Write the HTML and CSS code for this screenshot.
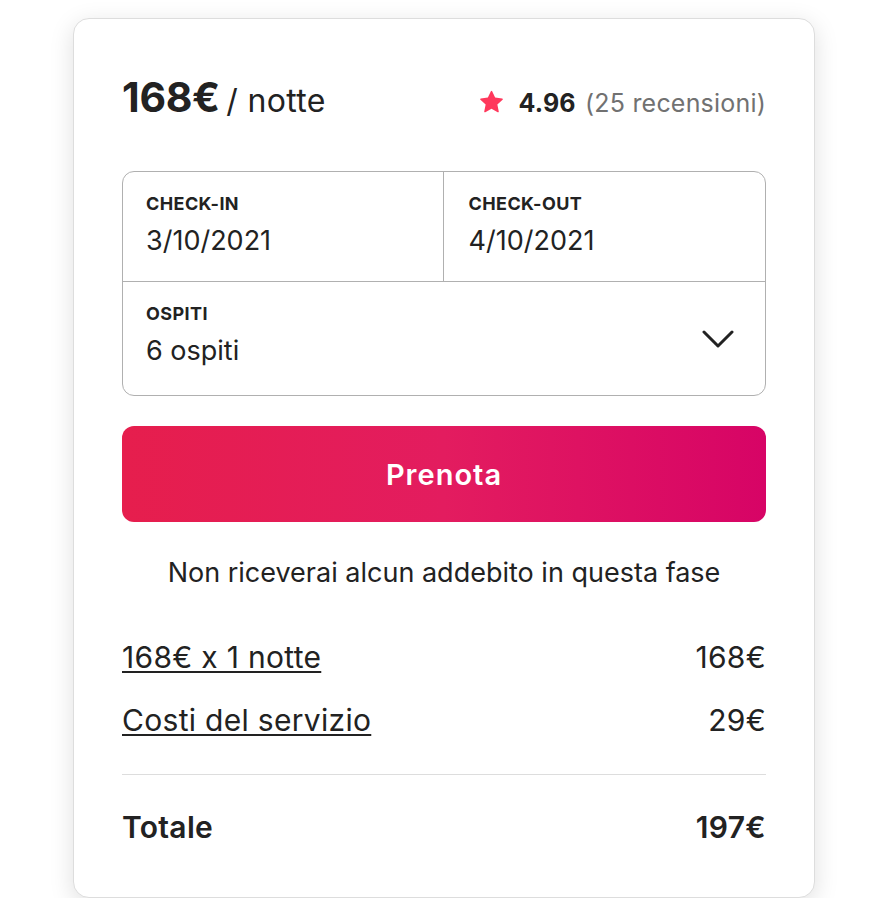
FILE: index.html
```html
<!DOCTYPE html>
<html lang="it">
<head>
<meta charset="utf-8">
<title>Prenota</title>
<link rel="stylesheet" href="styles.css">
</head>
<body>
<div class="card">
  <div class="header">
    <div class="price"><span class="amount">168€</span> <span class="per">/ notte</span></div>
    <div class="rating">
      <svg class="star" viewBox="0 0 32 32" aria-hidden="true"><path d="M15.094 1.579l-4.124 8.885-9.86 1.27a1 1 0 0 0-.542 1.736l7.293 6.565-1.965 9.852a1 1 0 0 0 1.483 1.061L16 25.951l8.625 4.997a1 1 0 0 0 1.482-1.06l-1.965-9.853 7.293-6.565a1 1 0 0 0-.541-1.735l-9.86-1.271-4.127-8.885a1 1 0 0 0-1.814 0z"/></svg>
      <span class="score">4.96</span>
      <span class="reviews">(25 recensioni)</span>
    </div>
  </div>

  <div class="picker">
    <div class="dates">
      <div class="cell">
        <div class="label">CHECK-IN</div>
        <div class="value">3/10/2021</div>
      </div>
      <div class="cell cell-right">
        <div class="label">CHECK-OUT</div>
        <div class="value">4/10/2021</div>
      </div>
    </div>
    <div class="guests">
      <div class="cell">
        <div class="label">OSPITI</div>
        <div class="value">6 ospiti</div>
      </div>
      <svg class="chevron" viewBox="0 0 32 18" aria-hidden="true"><polyline points="2,2 16,16 30,2"/></svg>
    </div>
  </div>

  <button class="book">Prenota</button>

  <p class="note">Non riceverai alcun addebito in questa fase</p>

  <div class="lines">
    <div class="line"><span class="link">168€ x 1 notte</span><span>168€</span></div>
    <div class="line"><span class="link">Costi del servizio</span><span>29€</span></div>
  </div>

  <div class="total"><span>Totale</span><span>197€</span></div>
</div>
</body>
</html>
```

FILE: styles.css
```css
html, body {
  margin: 0;
  padding: 0;
  background: #ffffff;
}

body {
  font-family: "Inter", "Noto Sans", "Liberation Sans", sans-serif;
  color: #222222;
  padding: 18px 0 0 73px;
}

.card {
  width: 644px;
  padding: 50px 48px 50px 48px;
  border: 1px solid #dddddd;
  border-radius: 16px;
  background: #ffffff;
  box-shadow: 0 6px 24px rgba(0, 0, 0, 0.13);
}

.header {
  display: flex;
  justify-content: space-between;
  align-items: baseline;
  height: 56px;
  line-height: 56px;
  margin-bottom: 46px;
}

.amount {
  font-size: 41px;
  font-weight: 700;
  letter-spacing: -0.3px;
}

.per {
  font-size: 32px;
  font-weight: 400;
  margin-left: 2px;
  letter-spacing: 0.3px;
}

.rating {
  font-size: 25px;
  letter-spacing: 0.2px;
}

.star {
  width: 23px;
  height: 23px;
  fill: #ff385c;
  margin-right: 8px;
  vertical-align: -1px;
}

.score {
  font-weight: 700;
  margin-right: 2px;
}

.reviews {
  color: #717171;
}

.picker {
  border: 1px solid #b0b0b0;
  border-radius: 12px;
}

.dates {
  display: flex;
  border-bottom: 1px solid #b0b0b0;
}

.dates .cell {
  flex: 1;
}

.cell {
  padding: 20px 24px 22px 23px;
}

.cell-right {
  border-left: 1px solid #b0b0b0;
  padding-left: 25px;
}

.label {
  font-size: 18px;
  font-weight: 700;
  line-height: 24px;
  letter-spacing: 0.4px;
}

.value {
  font-size: 27px;
  line-height: 36px;
  margin-top: 7px;
}

.guests {
  display: flex;
  align-items: center;
  justify-content: space-between;
}

.guests .cell {
  padding-bottom: 26px;
}

.chevron {
  width: 32px;
  height: 18px;
  margin-right: 31px;
  fill: none;
  stroke: #222222;
  stroke-width: 3;
  stroke-linecap: round;
  stroke-linejoin: round;
}

.book {
  display: block;
  width: 100%;
  height: 96px;
  margin-top: 30px;
  border: none;
  border-radius: 12px;
  background: linear-gradient(to right, #e61e4d 0%, #e31c5f 50%, #d70466 100%);
  color: #ffffff;
  font-family: inherit;
  font-size: 29px;
  font-weight: 600;
  letter-spacing: 1px;
}

.note {
  margin: 33px 0 0;
  text-align: center;
  font-size: 27px;
  line-height: 36px;
}

.lines {
  margin-top: 46px;
  padding-bottom: 34px;
  border-bottom: 1px solid #dddddd;
  display: flex;
  flex-direction: column;
  gap: 23px;
}

.line,
.total {
  display: flex;
  justify-content: space-between;
  font-size: 30px;
  line-height: 40px;
  letter-spacing: 0.3px;
}

.link {
  text-decoration: underline;
  text-decoration-thickness: 2px;
  text-underline-offset: 3px;
}

.total {
  margin-top: 32px;
  font-weight: 600;
}
```
